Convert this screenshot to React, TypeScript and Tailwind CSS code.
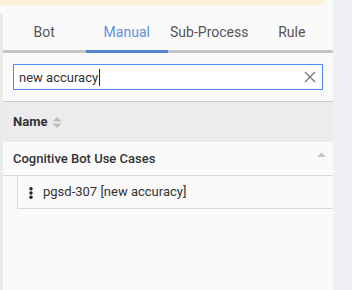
import React from "react";

export default function App() {
  const tabs = ["Bot", "Manual", "Sub-Process", "Rule"];
  return (
    <div className="w-[352px] h-[290px] bg-[#eff0f4] flex overflow-hidden" style={{ fontFamily: "Roboto, 'Liberation Sans', sans-serif" }}>
      <div className="w-[333px] bg-[#fafafa] flex flex-col">
        <div className="h-[5px] w-[325px] bg-[#fdf2d7] rounded-br-[6px]" />
        <div className="mt-[8px] flex-1 flex">
          <div className="w-[3px] bg-[#ebebeb]" />
          <div className="flex-1 flex flex-col">
            <div className="flex h-[40px]">
              {tabs.map((t) => {
                const active = t === "Manual";
                return (
                  <div
                    key={t}
                    className={
                      "flex-1 flex items-center justify-center text-[14px] border-b-[3px] " +
                      (active ? "text-[#5e8fe0] border-[#5585d2]" : "text-[#555] border-[#c4c4c4]")
                    }
                  >
                    <span className="mt-[1px]">{t}</span>
                  </div>
                );
              })}
            </div>
            <div className="px-[10px] pt-[11px] pb-[11px] border-b border-[#c9c9c9]">
              <div className="h-[26px] border border-[#4d8cf0] bg-white flex items-center pl-[5px] pr-[6px]">
                <span className="text-[13px] text-[#333] leading-none">new accuracy</span>
                <span className="w-px h-[17px] bg-[#222] ml-[1px]" />
                <div className="flex-1" />
                <svg width="12" height="12" viewBox="0 0 12 12">
                  <path d="M1 1 L11 11 M11 1 L1 11" stroke="#777" strokeWidth="1.4" />
                </svg>
              </div>
            </div>
            <div className="h-[41px] bg-[#ececee] flex items-center pl-[10px] border-b border-white">
              <span className="text-[13px] font-bold text-[#333]">Name</span>
              <svg className="ml-[5px]" width="10" height="13" viewBox="0 0 10 13">
                <path d="M0.5 5.5 L5 1 L9.5 5.5 Z" fill="#bdbdbd" />
                <path d="M0.5 7.5 L5 12 L9.5 7.5 Z" fill="#bdbdbd" />
              </svg>
            </div>
            <div className="h-[33px] flex items-center pl-[10px] pr-[7px] border-b border-[#d8d8d8] relative">
              <span className="text-[13px] font-medium text-[#333]">Cognitive Bot Use Cases</span>
              <div className="flex-1" />
              <svg className="mb-[9px]" width="9" height="5" viewBox="0 0 9 5">
                <path d="M0 5 L4.5 0.5 L9 5 Z" fill="#c4c4c4" />
              </svg>
            </div>
            <div className="ml-[14px] h-[33px] border-l border-b border-[#d8d8d8] flex items-center">
              <svg className="ml-[11px] mt-[2px]" width="4" height="12" viewBox="0 0 4 12">
                <circle cx="2" cy="1.8" r="1.7" fill="#222" />
                <circle cx="2" cy="6" r="1.7" fill="#222" />
                <circle cx="2" cy="10.2" r="1.7" fill="#222" />
              </svg>
              <span className="ml-[10px] text-[13px] text-[#333]">pgsd-307 [new accuracy]</span>
            </div>
          </div>
        </div>
      </div>
    </div>
  );
}
